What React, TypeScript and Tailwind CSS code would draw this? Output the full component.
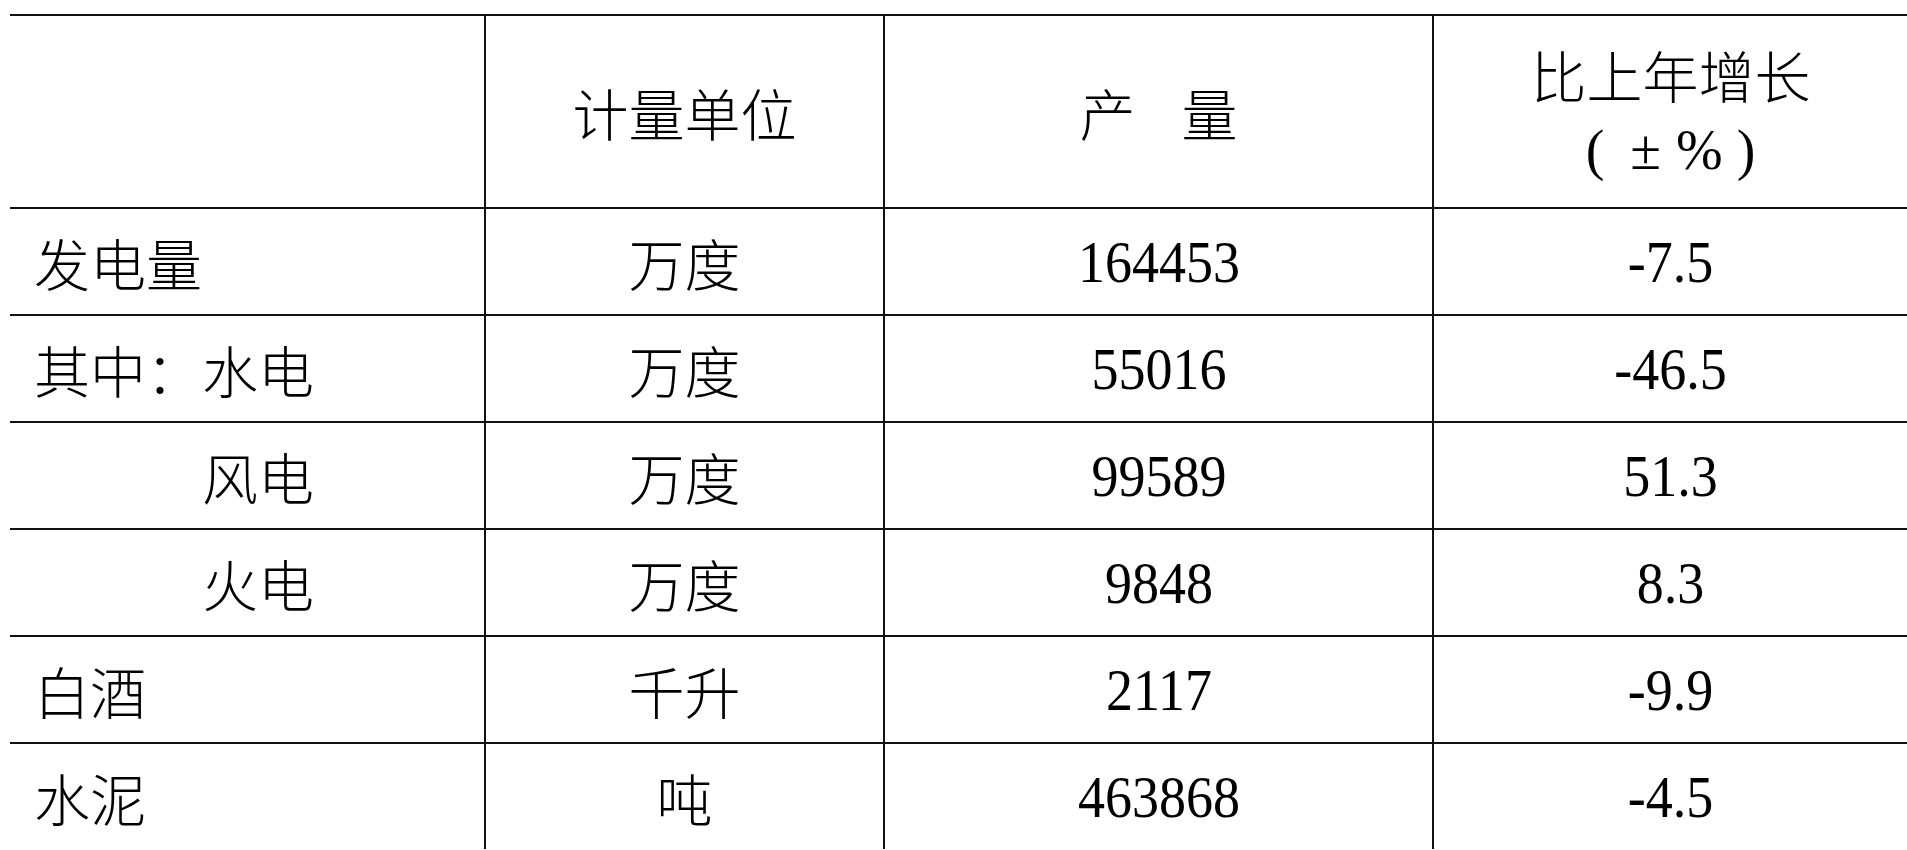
type Row = {
  name: string;
  indent?: boolean;
  unit: string;
  value: string;
  growth: string;
};

const rows: Row[] = [
  { name: "发电量", unit: "万度", value: "164453", growth: "-7.5" },
  { name: "其中：水电", unit: "万度", value: "55016", growth: "-46.5" },
  { name: "风电", indent: true, unit: "万度", value: "99589", growth: "51.3" },
  { name: "火电", indent: true, unit: "万度", value: "9848", growth: "8.3" },
  { name: "白酒", unit: "千升", value: "2117", growth: "-9.9" },
  { name: "水泥", unit: "吨", value: "463868", growth: "-4.5" },
];

const cjk = "font-['Noto_Sans_CJK_SC',sans-serif] font-light text-[56px] leading-none text-black";
const num = "font-['Liberation_Serif','Noto_Sans_CJK_SC',serif] text-[60px] leading-none text-black inline-block scale-x-90";
const grid = "grid grid-cols-[474px_399px_549px_475px]";

export default function App() {
  return (
    <div className="min-h-screen bg-white pt-[14px] pl-[10px]">
      {/* header */}
      <div className={`${grid} h-[193px] border-t-2 border-[#111]`}>
        <div />
        <div className="flex items-center justify-center border-l-2 border-[#111]">
          <span className={cjk}>计量单位</span>
        </div>
        <div className="flex items-center justify-center gap-[46px] border-l-2 border-[#111]">
          <span className={cjk}>产</span>
          <span className={cjk}>量</span>
        </div>
        <div className="flex flex-col items-center justify-center border-l-2 border-[#111] text-[56px] leading-[77px] text-black">
          <span className="font-['Noto_Sans_CJK_SC',sans-serif] font-light">比上年增长</span>
          <span className="flex font-['Liberation_Serif',serif]">
            <span>(</span>
            <span className="ml-[26px]">±</span>
            <span className="ml-[15px]">%</span>
            <span className="ml-[14px]">)</span>
          </span>
        </div>
      </div>

      {rows.map((r) => (
        <div key={r.name} className={`${grid} h-[107px] border-t-2 border-[#111]`}>
          <div className={`flex items-center ${r.indent ? "pl-[192px]" : "pl-[24px]"}`}>
            <span className={cjk}>{r.name}</span>
          </div>
          <div className="flex items-center justify-center border-l-2 border-[#111]">
            <span className={cjk}>{r.unit}</span>
          </div>
          <div className="flex items-center justify-center border-l-2 border-[#111]">
            <span className={num}>{r.value}</span>
          </div>
          <div className="flex items-center justify-center border-l-2 border-[#111]">
            <span className={num}>{r.growth}</span>
          </div>
        </div>
      ))}
    </div>
  );
}
